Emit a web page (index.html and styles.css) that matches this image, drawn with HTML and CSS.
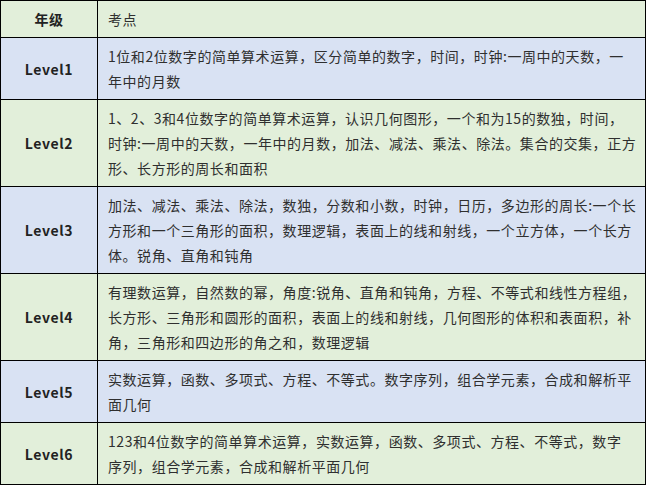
FILE: index.html
```html
<!DOCTYPE html>
<html lang="zh-CN">
<head>
<meta charset="utf-8">
<link rel="stylesheet" href="styles.css">
</head>
<body>
<table class="levels">
  <colgroup><col class="col-grade"><col class="col-points"></colgroup>
  <tr class="row-green head">
    <td class="grade">年级</td>
    <td class="points">考点</td>
  </tr>
  <tr class="row-blue">
    <td class="grade">Level1</td>
    <td class="points">1位和2位数字的简单算术运算，区分简单的数字，时间，时钟:一周中的天数，一<br>年中的月数</td>
  </tr>
  <tr class="row-green">
    <td class="grade">Level2</td>
    <td class="points">1、2、3和4位数字的简单算术运算，认识几何图形，一个和为15的数独，时间，<br>时钟:一周中的天数，一年中的月数，加法、减法、乘法、除法。集合的交集，正方<br>形、长方形的周长和面积</td>
  </tr>
  <tr class="row-blue">
    <td class="grade">Level3</td>
    <td class="points">加法、减法、乘法、除法，数独，分数和小数，时钟，日历，多边形的周长:一个长<br>方形和一个三角形的面积，数理逻辑，表面上的线和射线，一个立方体，一个长方<br>体。锐角、直角和钝角</td>
  </tr>
  <tr class="row-green">
    <td class="grade">Level4</td>
    <td class="points">有理数运算，自然数的幂，角度:锐角、直角和钝角，方程、不等式和线性方程组，<br>长方形、三角形和圆形的面积，表面上的线和射线，几何图形的体积和表面积，补<br>角，三角形和四边形的角之和，数理逻辑</td>
  </tr>
  <tr class="row-blue">
    <td class="grade">Level5</td>
    <td class="points">实数运算，函数、多项式、方程、不等式。数字序列，组合学元素，合成和解析平<br>面几何</td>
  </tr>
  <tr class="row-green">
    <td class="grade">Level6</td>
    <td class="points">123和4位数字的简单算术运算，实数运算，函数、多项式、方程、不等式，数字<br>序列，组合学元素，合成和解析平面几何</td>
  </tr>
</table>
</body>
</html>
```
FILE: styles.css
```css
html, body {
  margin: 0;
  padding: 0;
  background: #ffffff;
}
.levels {
  border-collapse: collapse;
  width: 646px;
  table-layout: fixed;
  font-family: "Noto Sans CJK SC", "Noto Sans", sans-serif;
  font-size: 14px;
  line-height: 25px;
  letter-spacing: 0.55px;
  color: #2f2f2f;
}
.col-grade { width: 97px; }
.levels td {
  border: 1px solid #000000;
  padding: 6px 2px 5px 10px;
  vertical-align: middle;
}
.levels td.points {
  white-space: nowrap;
  overflow: hidden;
}
.row-green td { background: #e2efda; }
.row-blue td { background: #d9e2f3; }
.levels td.grade {
  text-align: center;
  font-weight: bold;
  color: #222222;
  padding-left: 0;
  padding-right: 0;
  letter-spacing: 0.6px;
}
```
